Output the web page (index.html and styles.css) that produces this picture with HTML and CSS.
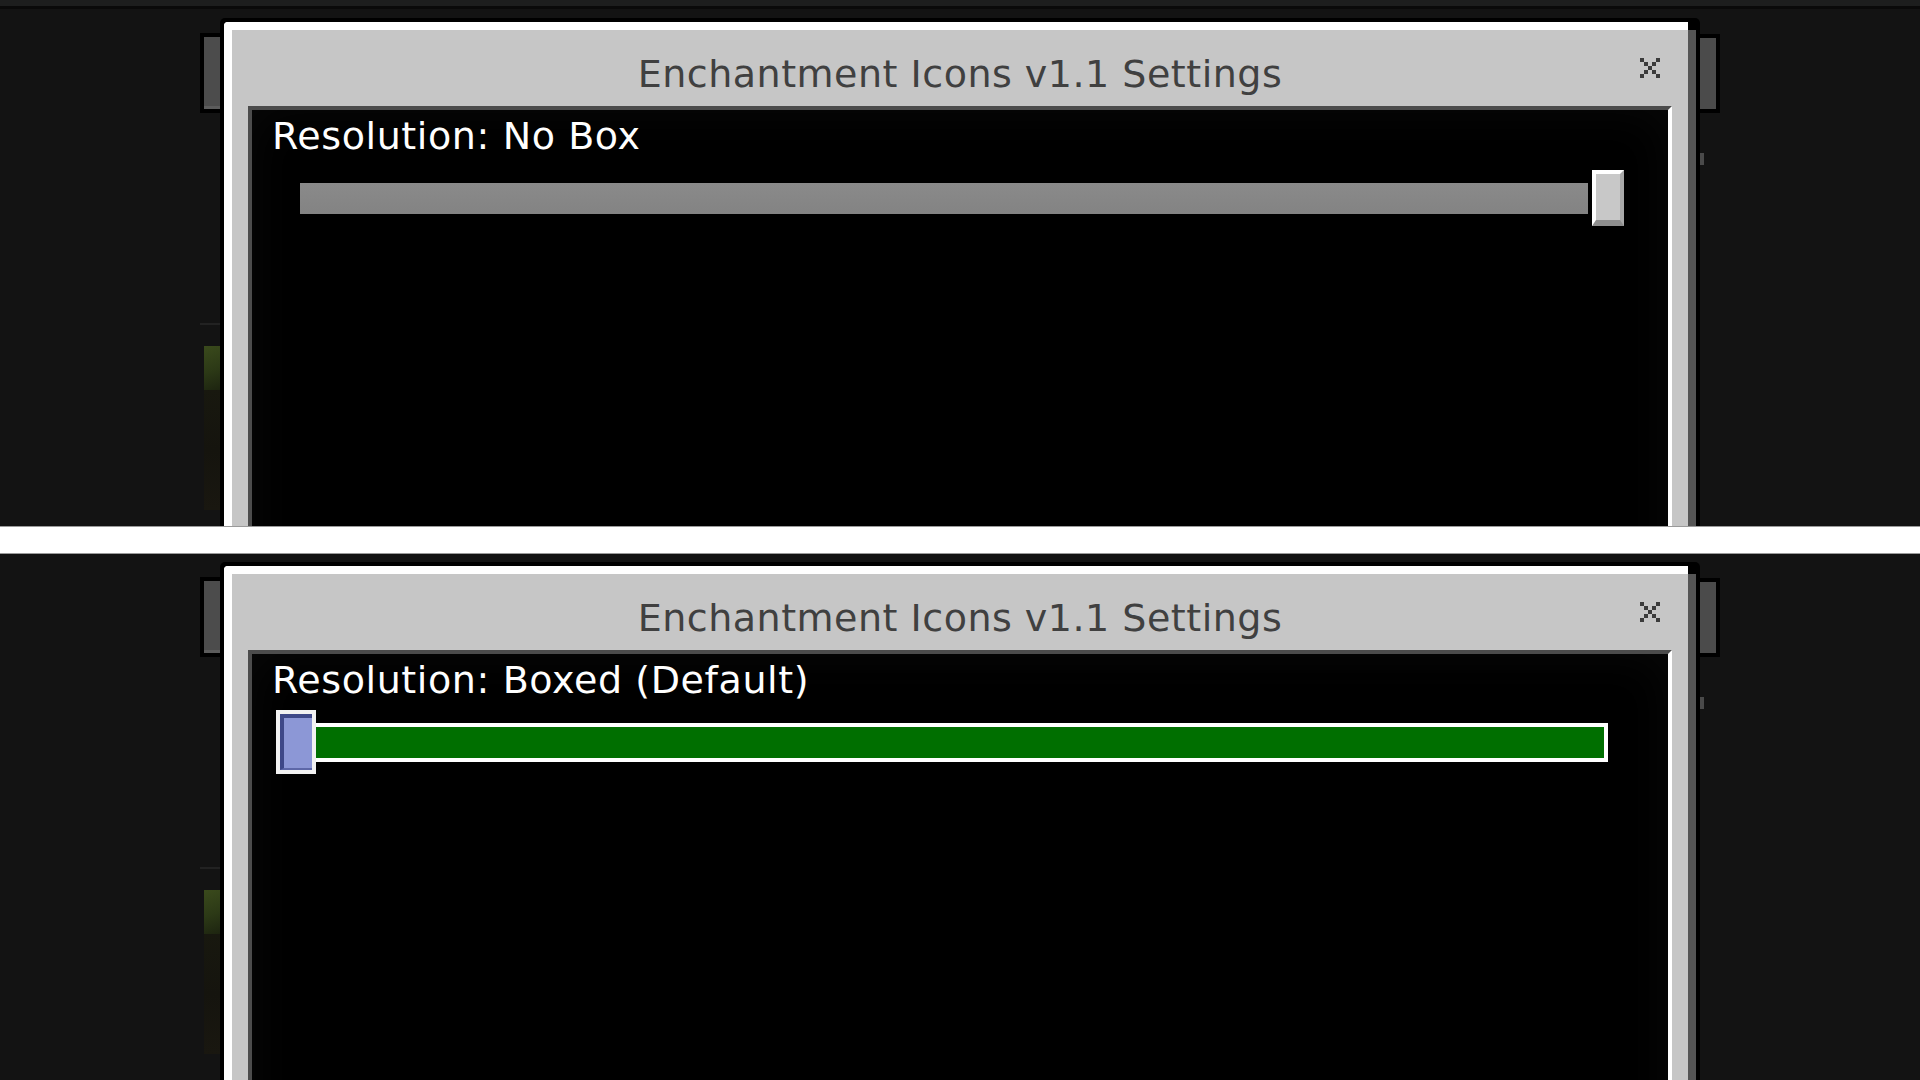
FILE: index.html
```html
<!DOCTYPE html>
<html lang="en">
<head>
<meta charset="utf-8">
<title>Enchantment Icons v1.1 Settings</title>
<link rel="stylesheet" href="styles.css">
</head>
<body>
<div class="shot">
  <section class="scene">
    <div class="scene-inner">
      <div class="topband"></div>
      <div class="stage">
        <div class="side side-left">
          <div class="stub stub-left"></div>
          <div class="bg-line"></div>
          <div class="bg-grass"></div>
          <div class="bg-dirt"></div>
        </div>
        <div class="panel">
          <div class="panel-face">
            <header class="panel-head">
              <span class="head-spacer"></span>
              <h1 class="panel-title">Enchantment Icons v1.1 Settings</h1>
              <button class="close" aria-label="Close">
                <svg viewBox="0 0 20 20" width="20" height="20"><g fill="#3b3b3b"><rect x="0" y="0" width="4" height="4"/><rect x="16" y="0" width="4" height="4"/><rect x="4" y="4" width="4" height="4"/><rect x="12" y="4" width="4" height="4"/><rect x="8" y="8" width="4" height="4"/><rect x="4" y="12" width="4" height="4"/><rect x="12" y="12" width="4" height="4"/><rect x="0" y="16" width="4" height="4"/><rect x="16" y="16" width="4" height="4"/></g></svg>
              </button>
            </header>
            <div class="panel-body">
              <div class="setting-label">Resolution: No Box</div>
              <div class="slider slider-max">
                <div class="track track-off"></div>
                <div class="thumb thumb-grey"><div class="thumb-face"></div></div>
              </div>
            </div>
          </div>
          <div class="panel-shade"></div>
        </div>
        <div class="side side-right">
          <div class="stub stub-right"></div>
          <div class="bg-mark"></div>
        </div>
      </div>
    </div>
  </section>
  <div class="divider"></div>
  <section class="scene scene-lower">
    <div class="scene-inner">
      <div class="topband"></div>
      <div class="stage">
        <div class="side side-left">
          <div class="stub stub-left"></div>
          <div class="bg-line"></div>
          <div class="bg-grass"></div>
          <div class="bg-dirt"></div>
        </div>
        <div class="panel">
          <div class="panel-face">
            <header class="panel-head">
              <span class="head-spacer"></span>
              <h1 class="panel-title">Enchantment Icons v1.1 Settings</h1>
              <button class="close" aria-label="Close">
                <svg viewBox="0 0 20 20" width="20" height="20"><g fill="#3b3b3b"><rect x="0" y="0" width="4" height="4"/><rect x="16" y="0" width="4" height="4"/><rect x="4" y="4" width="4" height="4"/><rect x="12" y="4" width="4" height="4"/><rect x="8" y="8" width="4" height="4"/><rect x="4" y="12" width="4" height="4"/><rect x="12" y="12" width="4" height="4"/><rect x="0" y="16" width="4" height="4"/><rect x="16" y="16" width="4" height="4"/></g></svg>
              </button>
            </header>
            <div class="panel-body">
              <div class="setting-label">Resolution: Boxed (Default)</div>
              <div class="slider slider-min">
                <div class="thumb thumb-blue"><div class="thumb-face"></div></div>
                <div class="track track-on"></div>
              </div>
            </div>
          </div>
          <div class="panel-shade"></div>
        </div>
        <div class="side side-right">
          <div class="stub stub-right"></div>
          <div class="bg-mark"></div>
        </div>
      </div>
    </div>
  </section>
</div>
</body>
</html>
```

FILE: styles.css
```css
* { box-sizing: border-box; }

html, body {
  margin: 0;
  padding: 0;
  background: #131313;
}

body {
  width: 1920px;
  height: 1080px;
  overflow: hidden;
  font-family: "DejaVu Sans", "Liberation Sans", sans-serif;
}

.shot {
  display: flex;
  flex-direction: column;
  height: 1080px;
}

.scene {
  height: 526px;
  overflow: hidden;
  background: #131313;
  flex: none;
}

.scene-lower .scene-inner {
  margin-top: -10px;
}

.topband {
  height: 9px;
  background: #1d1e1e;
  border-bottom: 3px solid #0a0a0a;
}

.stage {
  display: flex;
  align-items: flex-start;
}

/* background pieces peeking out at the sides */
.side {
  width: 20px;
  display: flex;
  flex-direction: column;
  flex: none;
}

.side-left {
  margin-left: 200px;
}

.stub-left {
  margin-top: 24px;
  height: 80px;
  border: 4px solid #000;
  border-right: 0;
  background: #4c4c4c;
  box-shadow: inset 0 -3px 0 #5c5c5c;
}

.bg-line {
  margin-top: 210px;
  height: 2px;
  background: #222;
}

.bg-grass {
  margin-top: 21px;
  margin-left: 4px;
  height: 44px;
  background: linear-gradient(160deg, #3a4a1c 0%, #2c3916 55%, #1d2410 100%);
}

.bg-dirt {
  margin-left: 4px;
  height: 120px;
  background: linear-gradient(180deg, #18180f 0%, #15140e 50%, #191710 100%);
}

.stub-right {
  margin-top: 25px;
  height: 79px;
  border: 4px solid #000;
  border-left: 0;
  background: #4b4b4b;
}

.bg-mark {
  margin-top: 40px;
  width: 4px;
  height: 12px;
  background: #4a4a4a;
}

/* the dialog */
.panel {
  width: 1480px;
  height: 1100px;
  margin-top: 9px;
  padding: 4px;
  background: #000;
  border-radius: 5px 5px 0 0;
  display: flex;
  flex: none;
}

.panel-face {
  flex: 1;
  display: flex;
  flex-direction: column;
  background: #c6c6c6;
  border-top: 8px solid #fff;
  border-left: 8px solid #fff;
  border-top-left-radius: 4px;
  padding: 0 16px;
}

.panel-shade {
  width: 8px;
  margin-top: 8px;
  background: #555;
}

.panel-head {
  height: 76px;
  display: grid;
  grid-template-columns: 1fr auto 1fr;
  align-items: start;
}

.panel-title {
  margin: 24px 0 0;
  font-size: 38px;
  line-height: 40px;
  font-weight: normal;
  color: #404040;
  letter-spacing: 0.5px;
  white-space: nowrap;
}

.close {
  justify-self: end;
  margin: 28px 12px 0 0;
  width: 20px;
  height: 20px;
  padding: 0;
  border: 0;
  background: none;
  display: block;
}

.close svg {
  display: block;
}

.panel-body {
  flex: 1;
  background: #000;
  border-top: 4px solid #4c4c4c;
  border-left: 4px solid #4c4c4c;
  border-right: 4px solid #fff;
  padding-top: 6px;
  box-shadow: inset 0 0 50px rgba(255, 255, 255, 0.035);
}

.setting-label {
  font-size: 38px;
  line-height: 40px;
  color: #fff;
  padding-left: 20px;
  letter-spacing: 0.6px;
  white-space: nowrap;
}

/* sliders */
.slider {
  display: flex;
  align-items: center;
  margin-top: 10px;
}

.slider-max { padding-left: 44px; }
.slider-min { padding-left: 24px; }

.track {
  width: 1292px;
  height: 39px;
  flex: none;
}

.track-off {
  border: 4px solid #000;
  border-right: 0;
  background: linear-gradient(180deg, #8a8a8a, #838383);
}

.track-on {
  border: 4px solid #fff;
  border-left: 0;
  background: #006f00;
}

.thumb {
  width: 40px;
  height: 64px;
  flex: none;
  border: 4px solid #000;
}

.thumb-face {
  height: 100%;
}

.thumb-grey .thumb-face {
  background: #c8c8c8;
  border-left: 4px solid #fff;
  border-top: 4px solid #fff;
  border-right: 4px solid #a9a9a9;
  border-bottom: 6px solid #8e8e8e;
}

.thumb-blue {
  border-color: #f2f2f2;
}

.thumb-blue .thumb-face {
  background: #8c97d6;
  border-left: 4px solid #3e4888;
  border-top: 4px solid #3e4888;
  border-bottom: 2px solid #5d67a8;
}

.divider {
  height: 28px;
  flex: none;
  background: #fff;
  border-top: 1px solid #9a9a9a;
  border-bottom: 1px solid #9a9a9a;
}
```
